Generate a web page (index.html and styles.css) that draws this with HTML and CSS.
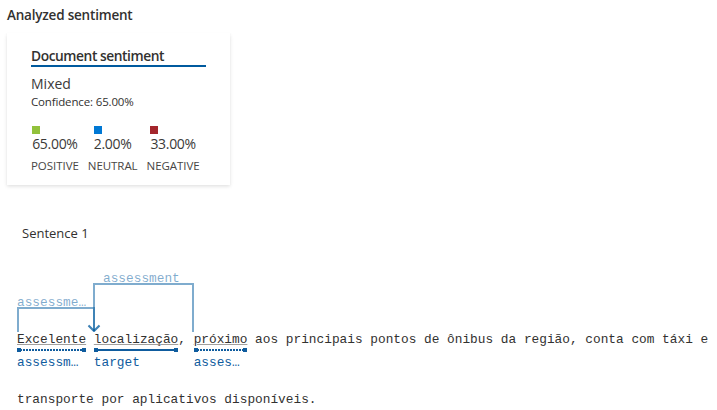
FILE: index.html
```html
<!DOCTYPE html>
<html lang="pt">
<head>
<meta charset="utf-8">
<title>Analyzed sentiment</title>
<link rel="stylesheet" href="styles.css">
</head>
<body>
<div class="page">
  <h2 class="title">Analyzed sentiment</h2>
  <div class="card">
    <div class="card-title">Document sentiment</div>
    <div class="overall">Mixed</div>
    <div class="confidence">Confidence: 65.00%</div>
    <div class="scores">
      <div class="score">
        <div class="score-top"><span class="swatch positive"></span><span class="pct">65.00%</span></div>
        <span class="score-label">POSITIVE</span>
      </div>
      <div class="score">
        <div class="score-top"><span class="swatch neutral"></span><span class="pct">2.00%</span></div>
        <span class="score-label">NEUTRAL</span>
      </div>
      <div class="score">
        <div class="score-top"><span class="swatch negative"></span><span class="pct">33.00%</span></div>
        <span class="score-label">NEGATIVE</span>
      </div>
    </div>
  </div>

  <div class="sentence">
    <div class="sentence-title">Sentence 1</div>
    <svg class="relations" width="717" height="64" viewBox="0 0 717 64">
      <text class="rel-label" x="103" y="14">assessment</text>
      <text class="rel-label" x="17" y="38">assessme…</text>
      <g class="rel-path">
        <path d="M193 64 V16 H94 V63"/>
        <path d="M88.5 57.5 L94 63 L99.5 57.5"/>
      </g>
      <g class="rel-path">
        <path d="M18 64 V40 H94 V63"/>
        <path d="M88.5 57.5 L94 63 L99.5 57.5"/>
      </g>
    </svg>
    <div class="tokens">
      <span class="tok">
        <span class="word linked">Excelente</span>
        <span class="mark dotted"></span>
        <span class="tag">assessm…</span>
      </span>
      <span class="plain"> </span>
      <span class="tok">
        <span class="word linked">localização</span>
        <span class="mark solid"></span>
        <span class="tag">target</span>
      </span>
      <span class="plain">, </span>
      <span class="tok">
        <span class="word linked">próximo</span>
        <span class="mark dotted"></span>
        <span class="tag">asses…</span>
      </span>
      <span class="plain"> aos principais pontos de ônibus da região, conta com táxi e</span>
    </div>
    <div class="line2">transporte por aplicativos disponíveis.</div>
  </div>
</div>
</body>
</html>
```

FILE: styles.css
```css
* { box-sizing: border-box; }

html, body {
  margin: 0;
  padding: 0;
  background: #ffffff;
}

body {
  font-family: "Open Sans", "Noto Sans", sans-serif;
  color: #323130;
  width: 717px;
  height: 410px;
  overflow: hidden;
}

.page {
  padding-left: 7px;
}

.title {
  margin: 5px 0 0 0;
  font-size: 13.5px;
  font-weight: 600;
  line-height: 20px;
  color: #323130;
  letter-spacing: -0.2px;
}

.card {
  margin-top: 8px;
  width: 223px;
  height: 152px;
  padding: 13px 24px 0 24px;
  background: #fff;
  box-shadow: 0 1.6px 3.6px rgba(0, 0, 0, 0.13), 0 0.3px 0.9px rgba(0, 0, 0, 0.11);
}

.card-title {
  font-size: 13.8px;
  font-weight: 600;
  line-height: 19px;
  border-bottom: 2px solid #005a9e;
  letter-spacing: -0.45px;
}

.overall {
  margin-top: 7px;
  font-size: 14px;
  line-height: 20px;
  color: #3b3a39;
}

.confidence {
  font-size: 11.5px;
  line-height: 15px;
  color: #323130;
  letter-spacing: -0.15px;
}

.scores {
  margin-top: 17px;
  display: flex;
  gap: 9px;
}

.score {
  display: flex;
  flex-direction: column;
  align-items: center;
}

.score-top {
  display: flex;
  flex-direction: column;
  align-items: flex-start;
}

.swatch {
  display: block;
  width: 8px;
  height: 8px;
}
.swatch.positive { background: #92c13b; }
.swatch.neutral { background: #0078d4; }
.swatch.negative { background: #a4262c; }

.pct {
  margin-top: 1px;
  font-size: 14px;
  line-height: 18px;
  color: #3b3a39;
  letter-spacing: -0.3px;
}

.score-label {
  margin-top: 5px;
  font-size: 11.5px;
  line-height: 15px;
  color: #484644;
  letter-spacing: -0.05px;
}

.sentence {
  margin-left: -7px;
}

.sentence-title {
  margin-top: 39px;
  padding-left: 22px;
  font-size: 13px;
  line-height: 18px;
  color: #323130;
}

.relations {
  display: block;
  margin-top: 26px;
}

.rel-label {
  font-family: "Liberation Mono", "DejaVu Sans Mono", monospace;
  font-size: 12.8px;
  fill: rgba(0, 90, 158, 0.5);
}

.rel-path path {
  fill: none;
  stroke: rgba(0, 90, 158, 0.5);
  stroke-width: 2;
}

.tokens {
  display: flex;
  align-items: flex-start;
  padding-left: 17px;
  font-family: "Liberation Mono", "DejaVu Sans Mono", monospace;
  font-size: 12.8px;
  line-height: 16px;
  white-space: pre;
  color: #323130;
}

.tok {
  display: flex;
  flex-direction: column;
}

.word.linked {
  text-decoration: underline;
  text-decoration-color: #a19f9d;
  text-decoration-thickness: 1px;
  text-underline-offset: 1px;
}

.mark {
  position: relative;
  height: 4px;
  margin-top: 0;
}

.mark::before,
.mark::after {
  content: "";
  position: absolute;
  top: 0;
  width: 4px;
  height: 4px;
  background: #0f5c9e;
}
.mark::before { left: 0; }
.mark::after { right: 0; }

.mark.solid {
  background: linear-gradient(#0f5c9e, #0f5c9e) center / 100% 2px no-repeat;
}

.mark.dotted {
  background: repeating-linear-gradient(to right, #0f5c9e 0 2px, transparent 2px 3px) center / 100% 2px no-repeat;
}

.tag {
  margin-top: 3px;
  color: #0f5c9e;
  overflow: hidden;
}

.line2 {
  margin-top: 21px;
  padding-left: 17px;
  font-family: "Liberation Mono", "DejaVu Sans Mono", monospace;
  font-size: 12.8px;
  line-height: 16px;
  white-space: pre;
  color: #323130;
}
```
